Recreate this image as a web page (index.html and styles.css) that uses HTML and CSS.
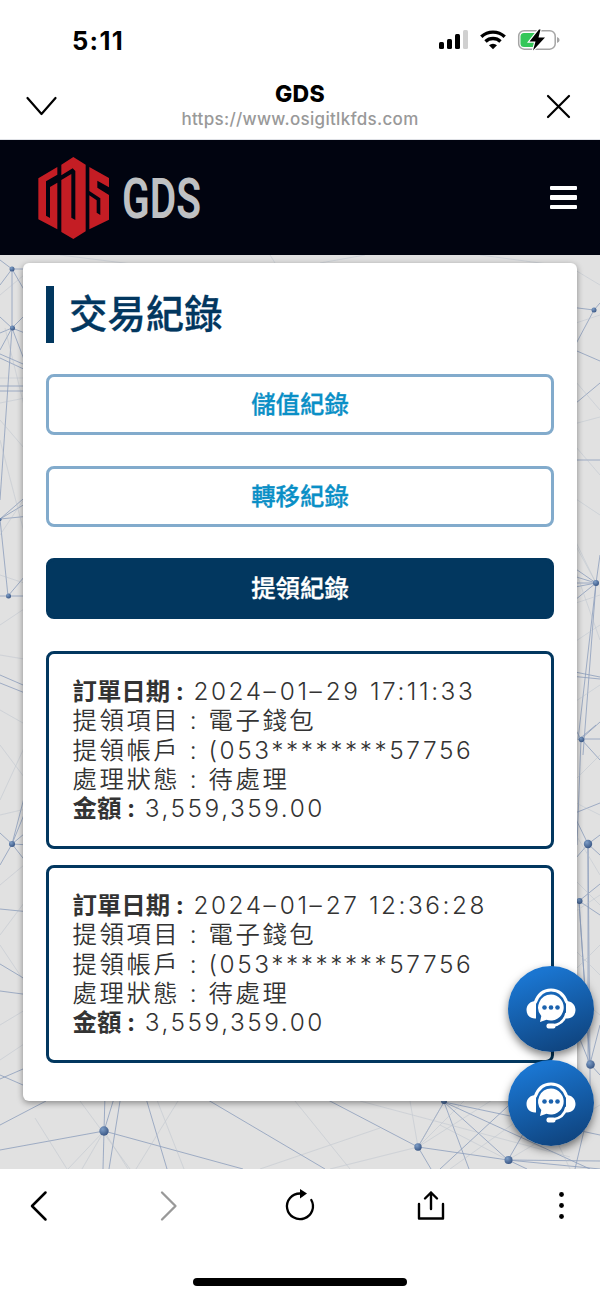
FILE: index.html
```html
<!DOCTYPE html>
<html lang="zh-Hant">
    <head>
        <meta charset="UTF-8">
        <meta name="viewport" content="width=device-width, initial-scale=1.0">
        <title>GDS</title>
        <link rel="stylesheet" href="styles.css">
    </head>
    <body>
        <div class="status-bar">
            <span class="clock">5:11</span>
            <svg class="status-icons" width="122" height="24" viewBox="0 0 122 24">
                <rect x="1" y="14" width="5" height="7" rx="1.5"/>
                <rect x="9" y="11" width="5" height="10" rx="1.5"/>
                <rect x="17" y="6" width="5" height="15" rx="1.5"/>
                <rect x="25" y="2" width="5" height="19" rx="1.5" fill="#d0d0d0"/>
                <g fill="none" stroke="#000" stroke-width="3.4">
                    <path d="M43.300 8.800a17 17 0 0 1 23.400 0"/>
                    <path d="M47.500 13.400a11 11 0 0 1 15 0"/>
                </g>
                <path d="M51 17.200a6 6 0 0 1 8 0l-4 4z"/>
                <rect x="80.700" y="2.700" width="36.500" height="18.500" rx="5.500" fill="none" stroke="#a5a5a5" stroke-width="1.500"/>
                <path d="M86 5h13l-3 14H86q-3.500 0-3.500-3.500v-7Q82.500 5 86 5z" fill="#34c759"/>
                <path d="M119 9q2.600 1 2.600 3t-2.600 3z" fill="#a5a5a5"/>
                <path d="M101 1.500L91.500 13.500h6l-2.500 9 12-13h-6.500l2-8z" stroke="#fff" stroke-width="2.400" paint-order="stroke"/>
            </svg>
        </div>
        <div class="browser-bar">
            <svg width="32" height="22" viewBox="0 0 32 22" fill="none" stroke="#000" stroke-width="2.200" stroke-linecap="round" stroke-linejoin="round">
                <path d="M1.500 3L15.500 19L29.500 3"/>
            </svg>
            <div class="site">
                <div class="site-title">GDS</div>
                <div class="site-url">https://www.osigitlkfds.com</div>
            </div>
            <svg width="32" height="26" viewBox="0 0 32 26" fill="none" stroke="#000" stroke-width="2.200" stroke-linecap="round">
                <path d="M6 3l21 21M27 3l-21 21"/>
            </svg>
        </div>

        <header class="navbar">
            <div class="brand">
                <svg width="72" height="82" viewBox="0 0 216 246" fill="#c41d24">
                    <path d="M61 30V53L27 73V176L39 183V90L61 77V217L4 187V64z"/>
                    <path d="M109 0L146 23V223L109 246L73 225V69L103 51V182L115 189V42L107 34L73 55V23z"/>
                    <path d="M157 30L216 63V91L181 71V92L216 114V188L157 217V115L179 130V167L190 174V124L157 102z"/>
                </svg>
                <svg class="brand-name" width="88" height="64" viewBox="0 0 88 64">
                    <text x="3" y="52" textLength="79" lengthAdjust="spacingAndGlyphs">GDS</text>
                </svg>
            </div>
            <div class="menu">
                <span></span>
                <span></span>
                <span></span>
            </div>
        </header>

        <main class="page">
            <svg class="network" width="600" height="914" viewBox="0 0 600 914">
                <defs>
                    <radialGradient id="node" cx=".35" cy=".3" r=".8">
                        <stop offset="0" stop-color="#7d9dc6"/>
                        <stop offset="1" stop-color="#33507f"/>
                    </radialGradient>
                </defs>
                <g stroke="#8b9dbb" stroke-width=".8">
                    <path d="M12 14V73L0 245M0 264L8 341M12 14L0 5M12 14L30 45M12 14H40M12 14L0 30M12 73L0 62M12 73L0 78M12 73L30 55M12 73L30 80M12 73L0 95M12 73L30 120M0 264L30 238M0 264L30 246M0 264L30 261M8 341H30M8 341H0M8 341L30 315"/>
                    <path d="M0 99L30 112M0 103L30 117M0 131H30M0 136H30M0 420L30 433M0 428L30 440M12 589L0 578M12 589L0 610M12 589L30 520M12 589L30 545M12 589L30 574M12 589L30 590M12 589L30 612M0 654L30 657M0 709L30 727M0 736L30 740"/>
                    <path d="M104 876L0 895M104 876L243 914M104 876L105 840M104 876L115 840M104 876L103 914M121 840L109 914M145 840L167 914M0 820L46 840M0 824L46 804M0 870L46 846M208 845L325 914M328 845L418 892L431 914"/>
                    <path d="M418 892L444 847L508 905L418 892M444 847L600 880M444 847L469 914M444 847L590 914M508 905L600 914M508 905L600 906M508 905L560 815M508 905L527 914M520 840L440 914M590 809V850L575 914"/>
                    <path d="M594 55L570 52M594 55L570 100M594 55L600 48M570 93L600 106M570 153L600 128M570 205H600M575 345L596 328L570 310M596 328L570 320M596 328H570M596 328L600 300M596 328L570 333M570 416L600 422M570 421L600 424M596 328L578 485L596 470M596 328L583 500"/>
                    <path d="M581 484L600 467M581 484L600 484M581 484L600 505M581 484L570 465M581 484L577 590M570 560L600 548M570 552L588 589L600 580M588 589L600 600M588 589L570 610M588 589V809M588 589L590 809L579 646L600 629M579 646L600 660M579 646L590 809L600 770M590 809L570 760M590 809L600 820"/>
                </g>
                <g stroke="#b5bdca" stroke-width=".6" opacity=".7">
                    <path d="M0 40L30 15M5 73L30 175M0 123H30M0 148L30 142M0 165L30 200M0 185L30 300M0 280L30 235M0 320L30 330M0 370L30 350M0 400L30 405M0 455L30 472M0 490L30 530M0 545L30 480M0 560L30 553M0 630L30 605M0 680L30 640M0 690L30 735M0 770L30 752M0 805L30 785"/>
                    <path d="M35 863L67 914M80 846L130 914M104 876L68 914M104 876L82 914M104 876L128 914M155 840L184 914M178 846L136 914M295 846L350 914M360 846L570 902M260 914L380 873M330 914L418 892M410 846L418 892L500 840M444 847L418 892L470 840M450 914L545 846M508 905L440 870M508 905L600 850M535 840L570 914"/>
                    <path d="M60 0L140 10M270 0L275 8M365 0L320 8M480 0L570 12L600 30M570 70L600 60M570 120L600 155M570 170L600 162M570 185L600 220M570 240L600 260M570 280L596 328L570 275M570 300L600 385M570 350L600 340M570 390L600 370M570 450L600 430M570 530L600 500M570 545L600 560M570 570L600 620M570 620L600 650M570 660L600 640M570 690L600 720M570 720L600 690M570 735L600 760"/>
                </g>
                <g fill="url(#node)">
                    <circle cx="12" cy="14" r="2.500"/>
                    <circle cx="12.500" cy="73" r="2.500"/>
                    <circle cx="0" cy="264.500" r="1.500"/>
                    <circle cx="8.500" cy="341" r="2.500"/>
                    <circle cx="12" cy="589" r="3"/>
                    <circle cx="104" cy="876" r="4.700"/>
                    <circle cx="418" cy="892" r="3.700"/>
                    <circle cx="444" cy="846" r="3"/>
                    <circle cx="508.500" cy="905" r="4"/>
                    <circle cx="594" cy="55" r="2.500"/>
                    <circle cx="596" cy="328" r="3"/>
                    <circle cx="581.500" cy="484.500" r="2.700"/>
                    <circle cx="588" cy="589" r="4.200"/>
                    <circle cx="579.500" cy="646" r="3"/>
                    <circle cx="590.500" cy="809.500" r="4.300"/>
                </g>
            </svg>

            <section class="card">
                <h1 class="title">交易紀錄</h1>
                <div class="tabs">
                    <button class="tab">儲值紀錄</button>
                    <button class="tab">轉移紀錄</button>
                    <button class="tab active">提領紀錄</button>
                </div>
                <div class="records">
                    <div class="record">
                        <div><b>訂單日期 :</b> 2024<i>–</i>01<i>–</i>29 17:11:33</div>
                        <div>提領項目 : 電子錢包</div>
                        <div>提領帳戶 : (053********57756</div>
                        <div>處理狀態 : 待處理</div>
                        <div><b>金額 :</b> 3,559,359.00</div>
                    </div>
                    <div class="record">
                        <div><b>訂單日期 :</b> 2024<i>–</i>01<i>–</i>27 12:36:28</div>
                        <div>提領項目 : 電子錢包</div>
                        <div>提領帳戶 : (053********57756</div>
                        <div>處理狀態 : 待處理</div>
                        <div><b>金額 :</b> 3,559,359.00</div>
                    </div>
                </div>
            </section>
        </main>

        <!-- customer service buttons -->
        <div class="support">
            <a class="support-btn">
                <svg width="50" height="42" viewBox="0 0 50 42">
                    <path d="M9 15C12 6 18 2 25 2s13 4 16 13" fill="none" stroke="#fff" stroke-width="3"/>
                    <path d="M10 13v17.500C4 31 .5 27 .5 22S4 13 10 13zM40 13v17.500c6 .5 9.500-3.500 9.500-8.500S46 13 40 13z" fill="#fff"/>
                    <path d="M40.500 25C39 32 34 36.500 27 37.500" fill="none" stroke="#fff" stroke-width="2.600"/>
                    <rect x="20.500" y="35.500" width="9" height="5" rx="2" fill="#fff"/>
                    <path d="M25 6.500a13 13 0 1 1-4.500 25.300L14 34l1.300-6A13 13 0 0 1 25 6.500z" fill="#fff"/>
                    <g fill="#1b62ae">
                        <circle cx="18.500" cy="19.500" r="2.300"/>
                        <circle cx="25" cy="19.500" r="2.300"/>
                        <circle cx="31.500" cy="19.500" r="2.300"/>
                    </g>
                </svg>
            </a>
            <a class="support-btn">
                <svg width="50" height="42" viewBox="0 0 50 42">
                    <path d="M9 15C12 6 18 2 25 2s13 4 16 13" fill="none" stroke="#fff" stroke-width="3"/>
                    <path d="M10 13v17.500C4 31 .5 27 .5 22S4 13 10 13zM40 13v17.500c6 .5 9.500-3.500 9.500-8.500S46 13 40 13z" fill="#fff"/>
                    <path d="M40.500 25C39 32 34 36.500 27 37.500" fill="none" stroke="#fff" stroke-width="2.600"/>
                    <rect x="20.500" y="35.500" width="9" height="5" rx="2" fill="#fff"/>
                    <path d="M25 6.500a13 13 0 1 1-4.500 25.300L14 34l1.300-6A13 13 0 0 1 25 6.500z" fill="#fff"/>
                    <g fill="#1b62ae">
                        <circle cx="18.500" cy="19.500" r="2.300"/>
                        <circle cx="25" cy="19.500" r="2.300"/>
                        <circle cx="31.500" cy="19.500" r="2.300"/>
                    </g>
                </svg>
            </a>
        </div>

        <footer class="toolbar">
            <div class="toolbar-icons">
                <svg width="32" height="36" viewBox="0 0 32 36" fill="none" stroke="#000" stroke-width="2.500" stroke-linecap="round" stroke-linejoin="round">
                    <path d="M23.500 5.500L10 19L23.500 32.500"/>
                </svg>
                <svg width="32" height="36" viewBox="0 0 32 36" fill="none" stroke="#999" stroke-width="2.300" stroke-linecap="round" stroke-linejoin="round">
                    <path d="M9 5.500L22.500 19L9 32.500"/>
                </svg>
                <svg width="32" height="36" viewBox="0 0 32 36" fill="none" stroke="#000" stroke-width="2.300" stroke-linecap="round">
                    <path d="M16 6.500A13 12.800 0 1 0 27.300 13"/>
                    <path d="M16 2L23 6.500L16 11.500z" fill="#000" stroke="none"/>
                </svg>
                <svg width="32" height="36" viewBox="0 0 32 36" fill="none" stroke="#000" stroke-width="2.400" stroke-linecap="round" stroke-linejoin="round">
                    <path d="M4 17V31.500H28V17M16 22V5.500M10 11.500L16 5.500L22 11.500"/>
                </svg>
                <svg width="32" height="36" viewBox="0 0 32 36">
                    <circle cx="15.500" cy="7.500" r="2.400"/>
                    <circle cx="15.500" cy="18.500" r="2.400"/>
                    <circle cx="15.500" cy="29.500" r="2.400"/>
                </svg>
            </div>
            <div class="home-indicator"></div>
        </footer>
    </body>
</html>
```
FILE: styles.css
```css
* {
    box-sizing: border-box;
}

body {
    margin: 0;
    height: 1298px;
    display: flex;
    flex-direction: column;
    overflow: hidden;
    background: #fff;
    font-family: Inter, "Noto Sans CJK TC", sans-serif;
    position: relative;
}

svg {
    display: block;
    flex: none;
}

.status-bar {
    height: 78px;
    padding: 2px 40px 0 72px;
    display: flex;
    align-items: center;
    justify-content: space-between;
}

.clock {
    font-size: 25.5px;
    font-weight: 700;
    letter-spacing: 1.3px;
}

.browser-bar {
    height: 62px;
    padding: 0 26px;
    border-bottom: 1px solid #dfe1e6;
    display: flex;
    align-items: center;
    justify-content: space-between;
}

.browser-bar > svg {
    margin-top: -6px;
}

.site {
    height: 100%;
    padding-top: 3px;
    text-align: center;
}

.site-title {
    font-size: 23px;
    font-weight: 800;
    line-height: 26px;
    letter-spacing: .3px;
}

.site-url {
    font-size: 17px;
    line-height: 24px;
    letter-spacing: .3px;
    font-weight: 500;
    color: #999;
}

.navbar {
    height: 115px;
    padding: 0 23px 0 37px;
    background: #010410;
    display: flex;
    align-items: center;
    justify-content: space-between;
}

.brand {
    display: flex;
    align-items: center;
    gap: 10px;
}

.brand-name {
    font-family: Roboto, sans-serif;
    font-size: 55px;
    font-weight: 600;
    fill: #bfc1c3;
}

.menu {
    width: 27px;
    display: flex;
    flex-direction: column;
    gap: 5px;
}

.menu span {
    height: 4.6px;
    border-radius: 1px;
    background: #fff;
}

.page {
    height: 914px;
    padding: 8px 23px 0;
    background: #e1e1e1;
    position: relative;
}

.network {
    position: absolute;
    left: 0;
    top: 0;
    fill: none;
}

.card {
    position: relative;
    height: 838px;
    padding: 23px;
    border-radius: 6px;
    background: #fff;
    box-shadow: 0 2px 6px rgba(0, 0, 0, .4);
}

.title {
    margin: 0 0 31px;
    height: 57px;
    padding-left: 15px;
    border-left: 8px solid #02375f;
    font-size: 38.4px;
    line-height: 57px;
    font-weight: 500;
    color: #02375f;
    -webkit-text-stroke: .3px;
}

.tabs {
    display: flex;
    flex-direction: column;
    gap: 31px;
    margin-bottom: 32px;
}

.tab {
    height: 61px;
    padding: 0 0 4px;
    border: 3px solid #82abcc;
    border-radius: 8px;
    background: #fff;
    font-family: inherit;
    font-size: 24.4px;
    font-weight: 500;
    color: #0a8fc6;
    -webkit-text-stroke: .3px;
}

.tab.active {
    border-color: #02375f;
    background: #02375f;
    color: #fff;
}

.records {
    display: flex;
    flex-direction: column;
    gap: 16px;
}

.record {
    height: 198px;
    padding: 23px 23.5px;
    border: 3px solid #02375f;
    border-radius: 8px;
    font-size: 24.4px;
    line-height: 29.3px;
    font-weight: 350;
    letter-spacing: 2.55px;
    white-space: nowrap;
    color: #333;
}

.record b {
    font-weight: 700;
    letter-spacing: 0;
}

.record i {
    font-style: normal;
    letter-spacing: 4px;
}

/* floats over the bottom right corner of the page */
.support {
    position: absolute;
    right: 6px;
    top: 966px;
    display: flex;
    flex-direction: column;
    gap: 8px;
}

.support-btn {
    width: 86px;
    height: 86px;
    border-radius: 50%;
    background: linear-gradient(160deg, #1a75d0 15%, #0f447f 90%);
    box-shadow: 0 4px 8px rgba(0, 0, 0, .5);
    display: flex;
    align-items: center;
    justify-content: center;
}

.toolbar {
    flex: 1;
    padding: 18px 22px 12px;
    display: flex;
    flex-direction: column;
    align-items: center;
    justify-content: space-between;
}

.toolbar-icons {
    width: 100%;
    display: flex;
    justify-content: space-between;
}

.home-indicator {
    width: 214px;
    height: 8px;
    border-radius: 4px;
    background: #000;
}
```
